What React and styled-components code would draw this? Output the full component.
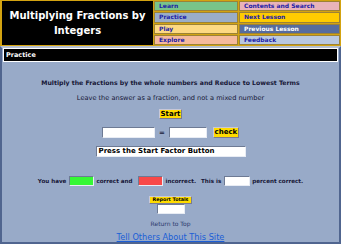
import React from "react";
import styled, { createGlobalStyle } from "styled-components";

const Global = createGlobalStyle`
  html, body { margin: 0; padding: 0; background: #98aac8; }
  body { font-family: "DejaVu Sans", Verdana, sans-serif; width: 341px; height: 244px; overflow: hidden; }
`;

const Page = styled.div`
  width: 341px;
  height: 244px;
  display: flex;
  flex-direction: column;
  box-sizing: border-box;
`;

const Header = styled.div`
  display: grid;
  grid-template-columns: 151px 84px 101px;
  gap: 1px;
  background: #d3a311;
  border: 2px solid #d3a311;
  border-top-width: 1px;
  border-bottom-width: 1px;
  height: 46px;
  box-sizing: border-box;
`;

const Title = styled.div`
  grid-row: 1 / span 4;
  background: #000;
  color: #fff;
  font-weight: bold;
  font-size: 10px;
  line-height: 15px;
  display: flex;
  align-items: center;
  justify-content: center;
  text-align: center;
  padding: 0 4px;
`;

const NavCell = styled.a`
  background: ${(p) => p.$bg};
  color: ${(p) => p.$fg || "#1c1ca8"};
  border: 1px solid #9c8236;
  font-weight: bold;
  font-size: 6px;
  line-height: 8px;
  padding-left: 4px;
  text-decoration: none;
  display: flex;
  align-items: center;
`;

const Body = styled.div`
  flex: 1;
  border: 2px solid #50658f;
  border-top: 2px solid #b5c0d2;
  background: #98aac8;
  display: flex;
  flex-direction: column;
  align-items: center;
  color: #161636;
`;

const Bar = styled.div`
  align-self: stretch;
  margin: 0 1px;
  background: #000;
  border: 1px solid #fff;
  color: #fff;
  font-weight: bold;
  font-size: 6.5px;
  height: 12px;
  line-height: 12px;
  padding-left: 2px;
`;

const Line = styled.div`
  font-size: ${(p) => p.$size || 7}px;
  font-weight: ${(p) => (p.$bold ? "bold" : "normal")};
  margin-top: ${(p) => p.$mt || 0}px;
  white-space: nowrap;
  line-height: 10px;
`;

const YellowButton = styled.button`
  font-family: inherit;
  background: #ffdc00;
  color: #000;
  font-weight: bold;
  font-size: ${(p) => p.$size || 7}px;
  border: 1px solid #c8c8d8;
  border-right-color: #7a7a90;
  border-bottom-color: #7a7a90;
  padding: 0;
  height: ${(p) => p.$h || 10}px;
  width: ${(p) => p.$w}px;
  line-height: 1;
  white-space: nowrap;
  margin-top: ${(p) => p.$mt || 0}px;
  margin-left: ${(p) => p.$ml || 0}px;
  cursor: pointer;
`;

const Row = styled.div`
  display: flex;
  align-items: center;
  margin-top: ${(p) => p.$mt || 0}px;
`;

const Box = styled.div`
  width: ${(p) => p.$w}px;
  height: ${(p) => p.$h || 10}px;
  background: ${(p) => p.$bg || "#fff"};
  border: 1px solid #e8ecf4;
  border-top-color: #6d7a94;
  border-left-color: #6d7a94;
  box-sizing: border-box;
  margin-left: ${(p) => p.$ml || 0}px;
  margin-top: ${(p) => p.$mt || 0}px;
  font-size: 7px;
  font-weight: bold;
  color: #000;
  line-height: 8px;
  padding-left: 2px;
  white-space: nowrap;
  overflow: hidden;
`;

const Label = styled.span`
  font-size: ${(p) => p.$size || 5.6}px;
  font-weight: bold;
  margin-left: ${(p) => p.$ml || 0}px;
  white-space: nowrap;
`;

const Small = styled.a`
  font-size: 6px;
  color: #2c3a6c;
  margin-top: 6px;
  text-decoration: none;
`;

const BigLink = styled.a`
  font-size: 8.2px;
  color: #1b5ed6;
  text-decoration: underline;
  margin-top: 5px;
  white-space: nowrap;
`;

const nav = [
  ["Learn", "#79c489"],
  ["Contents and Search", "#e9b3b9"],
  ["Practice", "#9aadc9"],
  ["Next Lesson", "#ffcc00"],
  ["Play", "#fdd983"],
  ["Previous Lesson", "#566c9e", "#ffffff"],
  ["Explore", "#f6ba9c"],
  ["Feedback", "#b9c8e0"],
];

export default function App() {
  return (
    <Page>
      <Global />
      <Header>
        <Title>Multiplying Fractions by Integers</Title>
        {nav.map(([t, bg, fg]) => (
          <NavCell key={t} $bg={bg} $fg={fg} href="#">
            {t}
          </NavCell>
        ))}
      </Header>
      <Body>
        <Bar>Practice</Bar>
        <Line $bold $size={6.2} $mt={16}>
          Multiply the Fractions by the whole numbers and Reduce to Lowest Terms
        </Line>
        <Line $size={6.6} $mt={5}>
          Leave the answer as a fraction, and not a mixed number
        </Line>
        <YellowButton $w={23} $mt={6}>Start</YellowButton>
        <Row $mt={8}>
          <Box $w={53} $h={11} />
          <Label $ml={4} $size={7}>=</Label>
          <Box $w={38} $h={11} $ml={4} />
          <YellowButton $w={26} $h={11} $ml={6}>check</YellowButton>
        </Row>
        <Box $w={150} $h={11} $mt={8}>Press the Start Factor Button</Box>
        <Row $mt={19}>
          <Label>You have</Label>
          <Box $w={25} $bg="#35f835" $ml={3} />
          <Label $ml={2}>correct and</Label>
          <Box $w={25} $bg="#f84848" $ml={5} />
          <Label $ml={3}>incorrect.</Label>
          <Label $ml={5}>This is</Label>
          <Box $w={26} $ml={3} />
          <Label $ml={2}>percent correct.</Label>
        </Row>
        <YellowButton $w={43} $h={8} $size={4.8} $mt={10}>Report Totals</YellowButton>
        <Box $w={28} $h={10} />
        <Small href="#">Return to Top</Small>
        <BigLink href="#">Tell Others About This Site</BigLink>
      </Body>
    </Page>
  );
}
